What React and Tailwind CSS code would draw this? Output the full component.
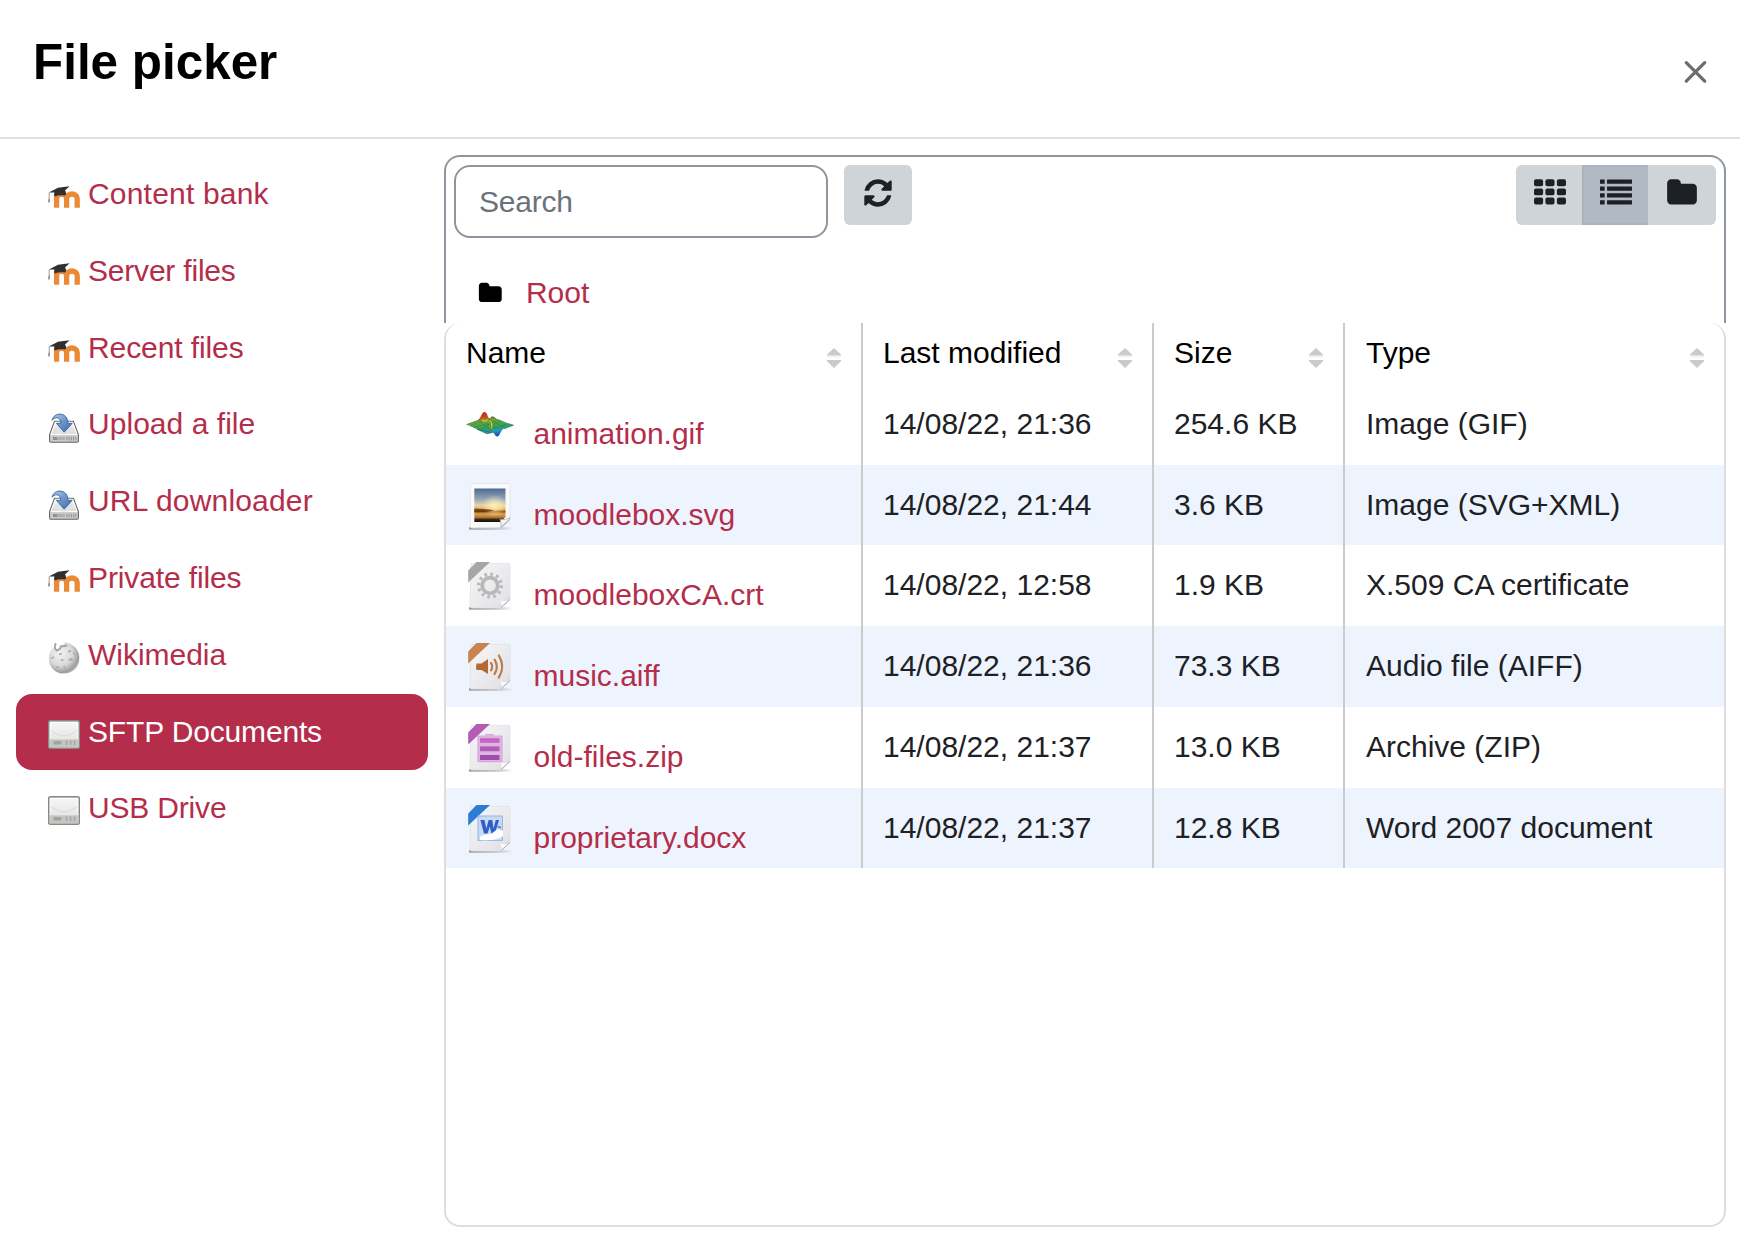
import React from "react";

const FOLDER =
  "M1728 608v704q0 92-66 158t-158 66h-1216q-92 0-158-66t-66-158v-960q0-92 66-158t158-66h320q92 0 158 66t66 158v32h672q92 0 158 66t66 158z";
const REFRESH =
  "M1639 1056q0 5-1 7-64 268-268 434.5t-478 166.5q-146 0-282.5-55t-243.5-157l-129 129q-19 19-45 19t-45-19-19-45v-448q0-26 19-45t45-19h448q26 0 45 19t19 45-19 45l-137 137q71 66 161 102t187 36q134 0 250-65t186-179q11-17 53-117 8-23 30-23h192q13 0 22.5 9.5t9.5 22.5zm25-800v448q0 26-19 45t-45 19h-448q-26 0-45-19t-19-45 19-45l138-138q-148-137-349-137-134 0-250 65t-186 179q-11 17-53 117-8 23-30 23h-199q-13 0-22.5-9.5t-9.5-22.5v-7q65-268 270-434.5t480-166.5q146 0 284 55.5t245 156.5l130-129q19-19 45-19t45 19 19 45z";

function Glyph({ d, className }) {
  return (
    <svg viewBox="0 0 1792 1792" className={className} fill="currentColor">
      <path d={d} />
    </svg>
  );
}

function GridIcon() {
  return (
    <svg viewBox="0 0 32 32" className="size-8" fill="currentColor">
      {[2.3, 11.4, 20.5].map((y) =>
        [0, 11.4, 22.9].map((x) => (
          <rect key={x + "-" + y} x={x} y={y} width="9.1" height="6.9" rx="1.9" />
        ))
      )}
    </svg>
  );
}

function ListIcon() {
  return (
    <svg viewBox="0 0 32 32" className="size-8" fill="currentColor">
      {[2.5, 9.4, 16.3, 23.2].map((y) => (
        <g key={y}>
          <rect x="0" y={y} width="4.7" height="4.3" rx="0.4" />
          <rect x="7" y={y} width="25" height="4.3" rx="0.4" />
        </g>
      ))}
    </svg>
  );
}

function MoodleIcon() {
  return (
    <svg viewBox="0 0 32 32" className="size-8">
      <path
        d="M8.6 26.8V15M18.6 26.8V17.2C18.6 11.6 8.6 11.6 8.6 17.2M29.2 26.8V17.2C29.2 11.6 18.6 11.6 18.6 17.2"
        fill="none"
        stroke="#ea8a36"
        strokeWidth="5.3"
      />
      <path d="M0.8 11.6L10 6.8L21.6 5.2L17 9.4C18.4 11 18.2 13.4 17.2 14.6C14 14 9.6 14.2 6.6 15.6C5.8 13.8 6 12.2 6.6 11.4Z" fill="#303032" />
      <path d="M1.2 11.6V20" stroke="#777" strokeWidth="0.7" />
      <path d="M1.2 16.5L2 20.5L0.6 22.3L0.2 19.5Z" fill="#8a8684" />
    </svg>
  );
}

function DownloadIcon() {
  return (
    <svg viewBox="0 0 32 32" className="size-8">
      <defs>
        <linearGradient id="dlBox" x1="0" y1="0" x2="0" y2="1">
          <stop offset="0" stopColor="#fafafa" />
          <stop offset="1" stopColor="#c4c5c2" />
        </linearGradient>
        <linearGradient id="dlArrow" x1="0" y1="0" x2="1" y2="1">
          <stop offset="0" stopColor="#b5cbe6" />
          <stop offset="0.5" stopColor="#6d94c6" />
          <stop offset="1" stopColor="#3c68a8" />
        </linearGradient>
      </defs>
      <path d="M6.6 10.2H25.4L30.4 23.6V29.8Q30.4 31.2 29 31.2H3Q1.6 31.2 1.6 29.8V23.6Z" fill="url(#dlBox)" stroke="#62645f" strokeWidth="1.1" />
      <path d="M7.4 11.4H24.6L29 23.4H3Z" fill="none" stroke="#fff" strokeWidth="1" />
      <ellipse cx="16" cy="19" rx="9" ry="4.5" fill="#e2e3e1" />
      <path d="M2.6 24.3H29.4V30.1H2.6Z" fill="#cbccca" />
      <rect x="5" y="26" width="12" height="3" fill="#8f918d" />
      <rect x="9" y="26" width="8" height="3" fill="#b0b1ae" />
      <path d="M19 25.7V29.4M21.2 25.7V29.4M23.4 25.7V29.4M25.6 25.7V29.4M27.8 25.7V29.4" stroke="#898b87" strokeWidth="0.9" />
      <path
        d="M4 9.2C5 4.8 9 2.9 12 3.1C17 3.4 20 6.8 19.9 12.3H24.2L16.2 21.2L8.4 12.3H12.8C13 9 11 6.9 8.8 6.8C6.9 6.8 5.2 7.7 4 9.2Z"
        fill="url(#dlArrow)"
        stroke="#3465a4"
        strokeWidth="0.9"
      />
    </svg>
  );
}

function GlobeIcon() {
  return (
    <svg viewBox="0 0 32 32" className="size-8">
      <defs>
        <radialGradient id="globe" cx="0.38" cy="0.36" r="0.66">
          <stop offset="0" stopColor="#f4f4f4" />
          <stop offset="0.6" stopColor="#d8d8d8" />
          <stop offset="0.92" stopColor="#9c9c9c" />
          <stop offset="1" stopColor="#b5b5b5" />
        </radialGradient>
      </defs>
      <path d="M7 4.4L9.5 9L13 6.5L17 2.2L15 0.4C24 0 31.4 7 31.4 16C31.4 25 24.6 31.6 16 31.6C7.4 31.6 0.8 25 0.8 16.4C0.8 11.4 3 7.2 7 4.4Z" fill="url(#globe)" />
      <path d="M8 1.4C6.6 3.4 6.4 6.6 8.6 8.4C11 8 12.6 6.2 12.8 4.4L19 3.4" fill="none" stroke="#a3a3a3" strokeWidth="2" />
      <path d="M3 16.5L6 15.2M11 12.4L14 11.6M20 9.8L23 8.6M12.6 18.5L15.6 17.6M20.5 18.2L24 16.4M23.8 16.6V19M8 25.5L11 24.6M15.6 23.8L17.4 26M25 10.5L27.4 13" stroke="#b0b0b0" strokeWidth="1.8" fill="none" />
    </svg>
  );
}

function DriveIcon() {
  return (
    <svg viewBox="0 0 32 32" className="size-8">
      <defs>
        <linearGradient id="drive" x1="0" y1="0" x2="0" y2="1">
          <stop offset="0" stopColor="#f7f7f7" />
          <stop offset="1" stopColor="#dededd" />
        </linearGradient>
      </defs>
      <rect x="0.8" y="1.9" width="30.4" height="27.2" rx="1.4" fill="url(#drive)" stroke="#888a85" strokeWidth="1.7" />
      <rect x="2.2" y="3.3" width="27.6" height="24.4" fill="none" stroke="#fff" strokeWidth="1" />
      <path d="M3.4 12Q16 22 28.6 12" fill="none" stroke="#d9dad8" strokeWidth="1" />
      <path d="M1.6 19.8H30.4V28.2H1.6Z" fill="#c5c6c3" />
      <path d="M1.6 19.8H30.4" stroke="#ecedeb" strokeWidth="0.9" />
      <rect x="5.5" y="22" width="8" height="3.6" rx="1" fill="#a1a39f" />
      <path d="M18.6 21.4V26M22.6 21.4V26M26.6 21.4V26" stroke="#a3a5a1" strokeWidth="1.5" />
    </svg>
  );
}

function SortIcon() {
  return (
    <svg viewBox="0 0 14 20" className="h-5 w-3.5">
      <path d="M7 0L14 6.4V7.6H0V6.4Z" fill="#cacaca" />
      <path d="M0 8.8H14" stroke="#ebebeb" strokeWidth="1" />
      <path d="M0 12H14V13.2L7 20L0 13.2Z" fill="#cacaca" />
    </svg>
  );
}

function Sheet({ id, ribbon, children }) {
  return (
    <svg viewBox="0 0 48 48" className="size-12">
      <defs>
        <linearGradient id={"sheet-" + id} x1="0" y1="0" x2="1" y2="1">
          <stop offset="0" stopColor="#f6f6f8" />
          <stop offset="0.8" stopColor="#e5e5e9" />
          <stop offset="1" stopColor="#d4d4d8" />
        </linearGradient>
        <linearGradient id={"fade-" + id} x1="0" y1="0" x2="1" y2="0">
          <stop offset="0" stopColor="#9a9a9c" />
          <stop offset="0.6" stopColor="#b9b9bb" />
          <stop offset="1" stopColor="#b9b9bb" stopOpacity="0" />
        </linearGradient>
      </defs>
      <rect x="3" y="45.2" width="44" height="2.5" fill={"url(#fade-" + id + ")"} />
      <path d="M5 1.4H43.2Q44 1.4 44 2.4V37.5L35.5 46H6Q3.8 46 4 43.5Z" fill={"url(#sheet-" + id + ")"} stroke="#e0e0e4" strokeWidth="0.7" />
      <path d="M35.5 46Q36.2 42 34.5 38.4Q39.5 40.5 44 37.3Z" fill="#fbfbfc" />
      <path d="M35 45.6L43.9 37.5" stroke="#aaaab0" strokeWidth="1" />
      {ribbon && <path d="M10.5 0H24L2.2 20.5V8.5Z" fill={ribbon} />}
      {children}
    </svg>
  );
}

function SurfaceIcon() {
  return (
    <svg viewBox="0 0 48 48" className="size-12">
      <defs>
        <linearGradient id="surface" x1="0.35" y1="0" x2="0.6" y2="1">
          <stop offset="0" stopColor="#c81e10" />
          <stop offset="0.2" stopColor="#c84a20" />
          <stop offset="0.35" stopColor="#6faa2f" />
          <stop offset="0.62" stopColor="#2fa35c" />
          <stop offset="0.8" stopColor="#2495b5" />
          <stop offset="1" stopColor="#1d3fc4" />
        </linearGradient>
      </defs>
      <path
        d="M0.5 23.5L11 19.8C14.5 18.8 15.5 11 18.5 11C21.5 11 21.5 17.5 24 17.5C26 14.6 28.5 16 30.5 18.2C34 19.2 37 20.4 40 22L47.5 24.2L38 27.8C34.5 28.8 34 35.5 31.2 35.5C28.7 35.5 29 31.8 26.3 31.5L21 32.8L11 28.2Z"
        fill="url(#surface)"
      />
      <path d="M0.5 23.5L11 19.8L14.5 18M24 17.5C26 14.6 28.5 16 30.5 18.2C34 19.2 37 20.4 40 22L47.5 24.2L38 27.8M26.3 31.5L21 32.8L11 28.2Z" fill="none" stroke="#2b6a4c" strokeWidth="0.9" opacity="0.7" />
      <path d="M5 24L17 20L24 25L35 20M8 26L22 23L30 27L41 23M14 29L22 24L31 19M13 20L26 30M23 18L38 26" fill="none" stroke="#25713f" strokeWidth="0.6" opacity="0.6" />
      <path d="M16 18.5Q18.5 22 21.5 18.5" fill="none" stroke="#e3b52c" strokeWidth="1.6" />
      <path d="M24.5 19Q21 25 25.5 28Q28 24 24.5 19Z" fill="#d9c832" />
      <path d="M24.5 21Q23 25 25.5 26.5" fill="none" stroke="#547a20" strokeWidth="1.3" />
    </svg>
  );
}

function PhotoIcon() {
  return (
    <Sheet id="photo">
      <defs>
        <linearGradient id="sky" x1="0" y1="0" x2="0" y2="1">
          <stop offset="0" stopColor="#4e6a92" />
          <stop offset="0.3" stopColor="#8fa0b2" />
          <stop offset="0.5" stopColor="#e6d3b2" />
          <stop offset="0.62" stopColor="#f4b04a" />
          <stop offset="0.69" stopColor="#7c4a16" />
          <stop offset="0.76" stopColor="#e0a04a" />
          <stop offset="0.86" stopColor="#b07a38" />
          <stop offset="0.93" stopColor="#33200f" />
          <stop offset="1" stopColor="#17100c" />
        </linearGradient>
        <radialGradient id="sun" cx="0.65" cy="0.62" r="0.4">
          <stop offset="0" stopColor="#fff6bb" stopOpacity="0.9" />
          <stop offset="1" stopColor="#fff6bb" stopOpacity="0" />
        </radialGradient>
      </defs>
      <path d="M4.8 2H43.5V37L35 45H4.8Z" fill="#fafafc" />
      <path d="M8.3 6.4H39.5V35L34.5 40H8.3Z" fill="url(#sky)" />
      <rect x="8.3" y="6.4" width="31.2" height="28" fill="url(#sun)" />
      <path d="M8.3 26.6Q22 27 28 28.4Q20 30 8.3 30Z" fill="#5c3512" opacity="0.8" />
      <path d="M34.8 45.5Q36 41 34 37.4Q40 38.5 43.6 35.6L43.4 37Z" fill="#f5f5f8" stroke="#a9a9b3" strokeWidth="0.8" />
    </Sheet>
  );
}

function GearIcon() {
  return (
    <Sheet id="gear" ribbon="#a6a6a6">
      <circle cx="24" cy="23.5" r="7.8" fill="none" stroke="#b8b8b8" strokeWidth="3.8" />
      <circle cx="24" cy="23.5" r="11.4" fill="none" stroke="#b8b8b8" strokeWidth="3.4" strokeDasharray="2.6 3.369" />
    </Sheet>
  );
}

function AudioIcon() {
  return (
    <Sheet id="audio" ribbon="#c8834f">
      <path d="M10.5 20.5H15.5L22 16V31L15.5 27H10.5Q9.6 23.7 10.5 20.5Z" fill="#b56a35" />
      <path d="M25 20Q27.6 23.5 25 27.4M28.6 16.6Q33 23.5 28.6 31M32.8 12.4Q39.6 23.5 32.8 34.6" fill="none" stroke="#bd7c4c" strokeWidth="2.2" strokeLinecap="round" />
    </Sheet>
  );
}

function ZipIcon() {
  return (
    <Sheet id="zip" ribbon="#b45bb4">
      <path d="M12 12H20V10.5H27V12H36V37.6H12Z" fill="#dfb4e0" stroke="#d8a8da" strokeWidth="1.2" strokeLinejoin="round" />
      <rect x="14" y="14.2" width="19.5" height="4.6" fill="#c067c2" />
      <rect x="14" y="22.4" width="19.5" height="4.8" fill="#b05bb6" />
      <rect x="14" y="31" width="19.5" height="5" fill="#a04eac" />
    </Sheet>
  );
}

function WordIcon() {
  return (
    <Sheet id="word" ribbon="#2d7cd3">
      <rect x="12" y="11" width="24.4" height="24.4" fill="#c8dbf5" stroke="#94b6e6" strokeWidth="1" />
      <path d="M14.4 15H18.4L20.4 23.6L22.6 15H26.2L27.6 23.4L29.8 15H33L29 28.6H25.4L23.8 21.6L21.6 28.6H18Z" fill="#2f5fc4" />
      <path d="M14 35V31.5L19 29.4L25 29L31 24.4L37 25.6V31Q30 36.5 14 35Z" fill="#fff" />
      <path d="M31.6 21.4L35 22.8" stroke="#4a80d0" strokeWidth="1.6" />
    </Sheet>
  );
}

const repositories = [
  { label: "Content bank", Icon: MoodleIcon, fit: "tracking-[0.19px]" },
  { label: "Server files", Icon: MoodleIcon, fit: "tracking-[-0.2px]" },
  { label: "Recent files", Icon: MoodleIcon, fit: "tracking-[-0.1px]" },
  { label: "Upload a file", Icon: DownloadIcon, fit: "tracking-[0.04px]" },
  { label: "URL downloader", Icon: DownloadIcon, fit: "tracking-[0.18px]" },
  { label: "Private files", Icon: MoodleIcon, fit: "tracking-[-0.12px]" },
  { label: "Wikimedia", Icon: GlobeIcon, fit: "tracking-[-0.03px]" },
  { label: "SFTP Documents", Icon: DriveIcon, fit: "tracking-[-0.16px]", active: true },
  { label: "USB Drive", Icon: DriveIcon, fit: "tracking-[-0.18px]" },
];

const files = [
  { name: "animation.gif", date: "14/08/22, 21:36", size: "254.6 KB", type: "Image (GIF)", Icon: SurfaceIcon, h: "h-[81px]" },
  { name: "moodlebox.svg", date: "14/08/22, 21:44", size: "3.6 KB", type: "Image (SVG+XML)", Icon: PhotoIcon, h: "h-[80px]" },
  { name: "moodleboxCA.crt", date: "14/08/22, 12:58", size: "1.9 KB", type: "X.509 CA certificate", Icon: GearIcon, h: "h-[81px]" },
  { name: "music.aiff", date: "14/08/22, 21:36", size: "73.3 KB", type: "Audio file (AIFF)", Icon: AudioIcon, h: "h-[81px]" },
  { name: "old-files.zip", date: "14/08/22, 21:37", size: "13.0 KB", type: "Archive (ZIP)", Icon: ZipIcon, h: "h-[81px]" },
  { name: "proprietary.docx", date: "14/08/22, 21:37", size: "12.8 KB", type: "Word 2007 document", Icon: WordIcon, h: "h-[80px]" },
];

const columns = [
  { label: "Name", cls: "pl-5 pr-5" },
  { label: "Last modified", cls: "border-l-2 border-[#cbcbcb] pl-5 pr-5" },
  { label: "Size", cls: "border-l-2 border-[#cbcbcb] pl-5 pr-5" },
  { label: "Type", cls: "border-l-2 border-[#cbcbcb] pl-[21px] pr-5" },
];

const GRID = "grid grid-cols-[415px_291px_191px_1fr]";
const CELL = "border-l-2 border-[#cbcbcb] pt-[17px] whitespace-nowrap";

export default function App() {
  return (
    <div className="flex h-[1238px] w-[1740px] flex-col overflow-hidden bg-white font-['Liberation_Sans',Arial,sans-serif] text-[30px] leading-[45px] text-[#1d2125]">
      <header className="flex h-[139px] shrink-0 items-start justify-between border-b-2 border-[#dee2e6] pr-8 pl-[33px]">
        <h1 className="mt-[33px] text-[49.4px] leading-[58px] font-bold text-black">File picker</h1>
        <button className="mt-[59px]" aria-label="Close">
          <svg viewBox="0 0 26 26" className="size-[26px]">
            <path d="M4.3 3.7L22.7 22.2M22.7 3.7L4.3 22.2" stroke="#6d6d6d" strokeWidth="3.3" strokeLinecap="round" />
          </svg>
        </button>
      </header>

      <div className="flex min-h-0 flex-1 pt-4 pr-[14px] pb-[11px] pl-4">
        <nav className="mr-4 flex w-[412px] shrink-0 flex-col pt-px">
          {repositories.map(({ label, Icon, active, fit }) => (
            <a
              key={label}
              className={
                "flex h-[76.8px] items-start gap-2 rounded-2xl px-8 pt-[15px] " +
                (active ? "bg-[#b42d4a] text-white" : "text-[#b42d4a]")
              }
            >
              <span className="pt-[10px]">
                <Icon />
              </span>
              <span className={fit}>{label}</span>
            </a>
          ))}
        </nav>

        <main className="flex min-w-0 flex-1 flex-col">
          <section className="flex h-[168px] shrink-0 flex-col rounded-t-2xl border-2 border-b-0 border-[#8f959e] px-2 pt-2">
            <div className="flex items-start">
              <div className="flex h-[73px] w-[374px] items-center rounded-2xl border-2 border-[#8f959e] pl-[23px] tracking-[-0.2px] text-[#6a737b]">
                Search
              </div>
              <button className="ml-4 flex h-[60px] w-[68px] rounded-md bg-[#ced4d8] pt-[11.5px] pl-[18px]">
                <Glyph d={REFRESH} className="size-8" />
              </button>
              <div className="ml-auto flex h-[60px] overflow-hidden rounded-md bg-[#ced4d8]">
                <button className="flex w-[66px] pt-[11.5px] pl-[18px]"><GridIcon /></button>
                <button className="flex w-[66px] border-2 border-r-0 border-[#a9b4be] bg-[#b1bac2] pt-[9.5px] pl-4"><ListIcon /></button>
                <button className="flex w-[68px] pt-[11.5px] pl-[18px]">
                  <Glyph d={FOLDER} className="size-8" />
                </button>
              </div>
            </div>
            <div className="mt-8 flex pl-[23.8px]">
              <Glyph d={FOLDER} className="mt-[11px] size-[24.6px] text-black" />
              <a className="ml-[23.5px] text-[#b42d4a]">Root</a>
            </div>
          </section>

          <section className="flex-1 rounded-2xl border-2 border-t-0 border-[#dedede]">
            <div className={GRID + " h-[61px] text-black"}>
              {columns.map(({ label, cls }) => (
                <div key={label} className={"flex items-start justify-between pt-[7px] " + cls}>
                  <span>{label}</span>
                  <span className="pt-[18px]"><SortIcon /></span>
                </div>
              ))}
            </div>
            {files.map(({ name, date, size, type, Icon, h }, i) => (
              <div key={name} className={GRID + " " + h + (i % 2 ? " bg-[#edf4fe]" : "")}>
                <div className="flex items-start gap-[19.5px] pl-5">
                  <span className="pt-[17px]"><Icon /></span>
                  <a className="pt-[27px] text-[#b42d4a]">{name}</a>
                </div>
                <div className={CELL + " pl-5"}>{date}</div>
                <div className={CELL + " pl-5"}>{size}</div>
                <div className={CELL + " pl-[21px]"}>{type}</div>
              </div>
            ))}
          </section>
        </main>
      </div>
    </div>
  );
}
